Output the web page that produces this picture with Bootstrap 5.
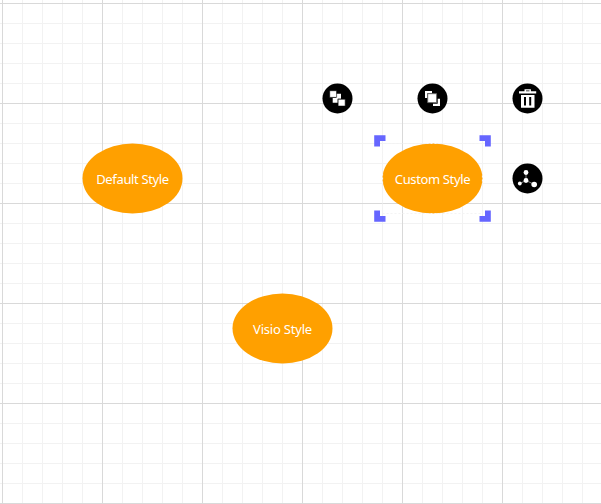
<!DOCTYPE html>
<html lang="en">
<head>
<meta charset="utf-8">
<meta name="viewport" content="width=device-width, initial-scale=1">
<title>Diagram</title>
<link href="https://cdn.jsdelivr.net/npm/bootstrap@5.3.0/dist/css/bootstrap.min.css" rel="stylesheet">
<style>
body{font-family:"Noto Sans","Open Sans",sans-serif}
.diagram{
  background-image:
    linear-gradient(90deg,#d9d9d9 1px,transparent 1px),
    linear-gradient(#d9d9d9 1px,transparent 1px),
    linear-gradient(90deg,#f2f2f2 1px,transparent 1px),
    linear-gradient(#f2f2f2 1px,transparent 1px);
  background-size:100px 100px,100px 100px,20px 20px,20px 20px;
  background-position:2px 3px}
.node{width:101px;height:71px;font-size:13px;line-height:18px;letter-spacing:-.36px}
.node svg{left:0;top:0;overflow:visible}
.node span{white-space:nowrap}
.node-default{left:82px;top:143px}
.node-custom{left:382px;top:143px}
.node-visio{left:232px;top:293px;letter-spacing:-.2px}
.tool{width:31px;height:31px}
.tool svg{display:block}
.tool-group{left:322px;top:83px}
.tool-front{left:417px;top:83px}
.tool-delete{left:512px;top:83px}
.tool-link{left:512px;top:163px}
</style>
<script src="https://cdn.jsdelivr.net/npm/bootstrap@5.3.0/dist/js/bootstrap.bundle.min.js" defer></script>
</head>
<body class="bg-white overflow-hidden">
<main class="diagram position-relative vw-100 vh-100 overflow-hidden">
  <div class="node node-default position-absolute d-flex align-items-center justify-content-center text-white">
    <svg class="position-absolute" width="101" height="71"><ellipse cx="50.500" cy="35.500" rx="50" ry="35" fill="#ffa000"/></svg>
    <span class="position-relative">Default Style</span>
  </div>
  <div class="node node-custom position-absolute d-flex align-items-center justify-content-center text-white">
    <svg class="position-absolute" width="101" height="71" viewBox="-.5 -.5 101 71">
      <ellipse cx="50" cy="35" rx="50" ry="35" fill="#ffa000"/>
      <rect width="100" height="70" fill="none" stroke="#f4f4f4" stroke-width="1.200" stroke-dasharray="2 2"/>
      <g fill="#6666ff">
        <path d="M-8.300-8.300H3v5.800h-5.500v5.500h-5.800z"/>
        <path d="M108.300-8.300H97v5.800h5.500v5.500h5.800z"/>
        <path d="M-8.300 78.300H3v-5.800h-5.500v-5.500h-5.800z"/>
        <path d="M108.300 78.300H97v-5.800h5.500v-5.500h5.800z"/>
      </g>
    </svg>
    <span class="position-relative">Custom Style</span>
  </div>
  <div class="node node-visio position-absolute d-flex align-items-center justify-content-center text-white">
    <svg class="position-absolute" width="101" height="71"><ellipse cx="50.500" cy="35.500" rx="50" ry="35" fill="#ffa000"/></svg>
    <span class="position-relative">Visio Style</span>
  </div>

  <div class="tool tool-group position-absolute" role="button" aria-label="Group">
    <svg width="31" height="31" viewBox="-.5 -.5 31 31"><circle cx="15" cy="15" r="15"/>
      <g fill="#fff"><path d="M13.500 10.300h5v5h-5zM10.200 14.500h5v4.700h-5z"/><path stroke="#000" stroke-width=".6" d="M7.200 7.200h6.900v6.700H7.200zM15.600 15.700h7.100v6.900h-7.100z"/></g></svg>
  </div>
  <div class="tool tool-front position-absolute" role="button" aria-label="Bring to front">
    <svg width="31" height="31" viewBox="-.5 -.5 31 31"><circle cx="15" cy="15" r="15"/>
      <path fill="#fff" d="M7.500 7.500h7v2.300H9.800v4.700H7.500zM22.500 22.500h-7v-2.300h4.700v-5h2.300z"/><path fill="#fff" stroke="#666" stroke-width=".9" d="M10.200 10.200h8.900v8.900h-8.900z"/></svg>
  </div>
  <div class="tool tool-delete position-absolute" role="button" aria-label="Delete">
    <svg width="31" height="31" viewBox="-.5 -.5 31 31"><circle cx="15" cy="15" r="15"/>
      <path fill="#fff" fill-rule="evenodd" d="M6.500 7.700h5.500V5.700h6.400v2h5.300v2.300h-17.200zM13.500 6.900v.8h3.500v-.8zM8.500 11.500h13.500v12.800h-13.500zM11.500 13.500v8.500h2v-8.500zM16.700 13.500v8.500h2v-8.500z"/></svg>
  </div>
  <div class="tool tool-link position-absolute" role="button" aria-label="Connect">
    <svg width="31" height="31" viewBox="-.5 -.5 31 31"><circle cx="15" cy="15" r="15"/>
      <path d="M13.500 9v8l-6.200 3M13.500 17l8.500 4" fill="none" stroke="#bbb" stroke-width=".7"/>
      <g fill="#fff"><circle cx="13.500" cy="9" r="2.400"/><circle cx="13.500" cy="17" r="2.400"/><circle cx="7.300" cy="20" r="1.900"/><circle cx="21.700" cy="21" r="2.800"/></g></svg>
  </div>
</main>
</body>
</html>
